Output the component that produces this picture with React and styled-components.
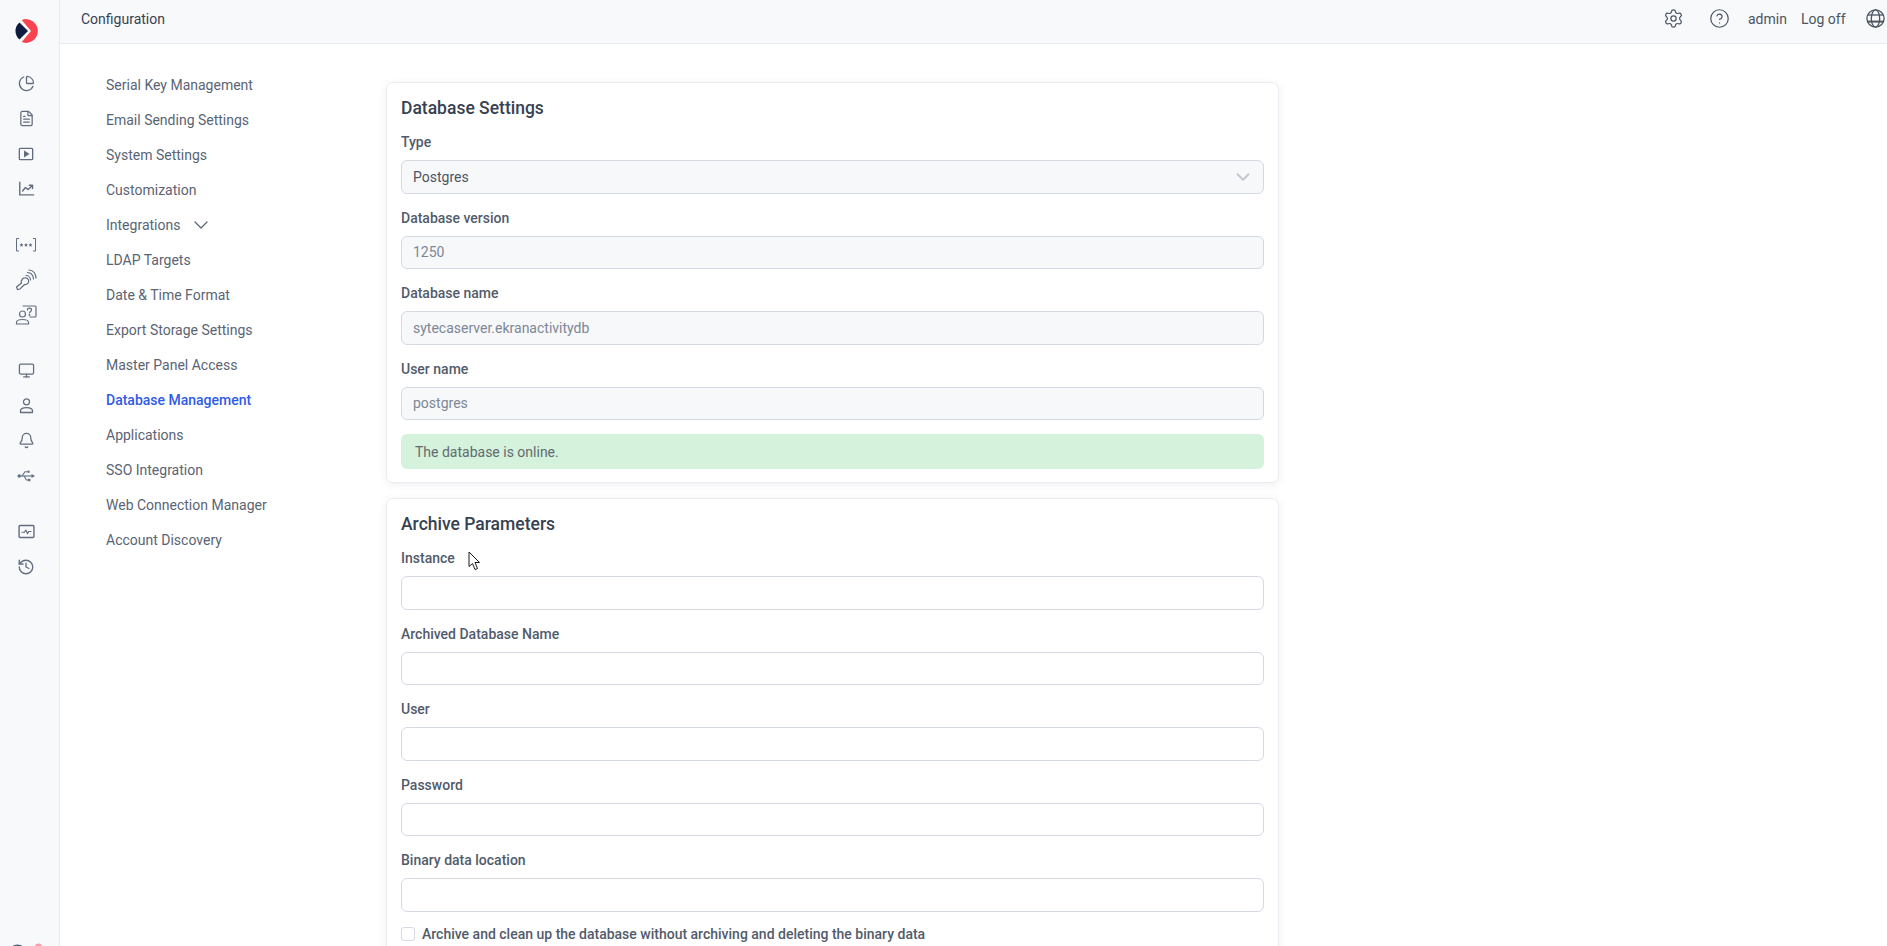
import styled, { createGlobalStyle } from 'styled-components'
import { ChevronDown, Settings, CircleHelp, ChartPie, FileText, Monitor, Bell, History } from 'lucide-react'

const GlobalStyle = createGlobalStyle`
   html, body {
      margin: 0;
      padding: 0;
      height: 100%;
      overflow: hidden;
      background: #fff;
   }
   * {
      box-sizing: border-box;
   }
`

const Page = styled.div`
   position: relative;
   width: 100%;
   height: 946px;
   display: flex;
   overflow: hidden;
   font-family: 'Roboto', sans-serif;
   font-size: 14px;
   color: #4b5563;
`

const Sidebar = styled.aside`
   width: 60px;
   flex-shrink: 0;
   position: relative;
   background: #f8f9fb;
   border-right: 1px solid #e8eaef;
   display: flex;
   flex-direction: column;
   align-items: center;
   padding-top: 19px;
   padding-right: 7px;
`

const LogoBox = styled.div`
   height: 24px;
   margin-bottom: 23px;
   display: flex;
`

const IconGroup = styled.div`
   display: flex;
   flex-direction: column;
   margin-bottom: 21px;
`

const IconItem = styled.div`
   height: 35px;
   width: 35px;
   display: flex;
   align-items: center;
   justify-content: center;
   color: #636d80;
`

const BottomDots = styled.svg`
   position: absolute;
   left: 0;
   bottom: 0;
`

const Main = styled.div`
   flex: 1;
   min-width: 0;
   display: flex;
   flex-direction: column;
`

const TopBar = styled.header`
   height: 44px;
   flex-shrink: 0;
   background: #f8f9fb;
   border-bottom: 1px solid #e8eaef;
   display: flex;
   align-items: center;
   padding: 0 1px 6px 21px;
`

const PageTitle = styled.div`
   flex: 1;
   color: #374151;
`

const TopIcon = styled.div`
   display: flex;
   color: #4b5563;
   margin-left: ${(p) => p.$ml}px;
`

const TopLink = styled.span`
   color: #4b5563;
   margin-left: ${(p) => p.$ml}px;
`

const Content = styled.div`
   flex: 1;
   display: flex;
   align-items: flex-start;
`

const SideNav = styled.nav`
   width: 326px;
   flex-shrink: 0;
   padding: 23.5px 0 0 46px;
   display: flex;
   flex-direction: column;
`

const NavItem = styled.div`
   height: 35px;
   display: flex;
   align-items: center;
   gap: 9px;
   color: ${(p) => (p.$active ? '#2f5be7' : '#5a6474')};
   font-weight: ${(p) => (p.$active ? 500 : 400)};
`

const Cards = styled.div`
   width: 893px;
   padding-top: 38px;
   display: flex;
   flex-direction: column;
   gap: 15px;
`

const Card = styled.section`
   background: #fff;
   border: 1px solid #eaecf1;
   border-radius: 7px;
   padding: 14px 14px 13px 14px;
   box-shadow: 0 2px 8px rgba(60, 70, 100, 0.08);
`

const CardTitle = styled.h2`
   margin: 0 0 13px;
   font-size: 17.5px;
   line-height: 22px;
   font-weight: 500;
   color: #374151;
`

const Field = styled.div`
   margin-bottom: 14px;
`

const Label = styled.label`
   display: block;
   font-weight: 500;
   line-height: 21px;
   margin-bottom: 7px;
   color: #525b6b;
`

const Input = styled.div`
   height: 33.5px;
   border: 1px solid #d5d9e2;
   border-radius: 6px;
   background: ${(p) => (p.$filled ? '#f7f8fa' : '#fff')};
   color: ${(p) => (p.$muted ? '#7d8796' : '#4b5563')};
   display: flex;
   align-items: center;
   justify-content: space-between;
   padding: 0 11px;
`

const SelectArrow = styled(ChevronDown)`
   margin-right: -2px;
   color: #c4c8cf;
`

const Alert = styled.div`
   height: 35px;
   display: flex;
   align-items: center;
   padding: 0 14px;
   border-radius: 6px;
   background: #d5f2dc;
   color: #5f6b70;
`

const CheckRow = styled.div`
   display: flex;
   align-items: center;
   gap: 7px;
   margin-top: 2.5px;
   font-weight: 500;
   color: #525b6b;
`

const CheckBox = styled.span`
   width: 14px;
   height: 14px;
   border: 1px solid #d5d9e2;
   border-radius: 3px;
   background: #fff;
`

const Cursor = styled.svg`
   position: absolute;
   left: 468px;
   top: 551px;
`

const Logo = () => (
   <svg width="24" height="24" viewBox="0 0 24 24">
      <path d="M14 12 L5.5 3.5 A11 11 0 0 0 5.5 20.5 Z" fill="#0f1c3f" />
      <path d="M7.7 0.9 A11.9 11.9 0 1 1 7.7 23.1 L17 12 Z" fill="#f9434f" />
   </svg>
)

const GlobeIcon = () => (
   <svg width="21" height="21" viewBox="0 0 21 21" fill="none" stroke="currentColor" strokeWidth="1.3">
      <circle cx="10.5" cy="10.5" r="8.6" />
      <ellipse cx="10.5" cy="10.5" rx="4.2" ry="8.6" />
      <path d="M2.8 7 H18.2" />
      <path d="M2.4 13.6 H18.6" strokeWidth="2" />
   </svg>
)

const PlayBox = () => (
   <svg width="16" height="16" viewBox="0 0 24 24" fill="none" stroke="currentColor" strokeWidth="2">
      <rect x="2" y="3.5" width="20" height="17" rx="1.5" />
      <path d="M10 8.5 L15.5 12 L10 15.5 Z" fill="currentColor" />
   </svg>
)

const TrendChart = () => (
   <svg width="17" height="17" viewBox="0 0 24 24" fill="none" stroke="currentColor" strokeWidth="2" strokeLinecap="round" strokeLinejoin="round">
      <path d="M2.5 3 V21 H22" />
      <path d="M6.5 15.5 L10.5 10.5 L14 13.5 L20 8" />
      <path d="M16 7.5 H20.5 V12" />
   </svg>
)

const star = 'M0 -2 L0.6 -0.7 L2 -0.6 L1 0.3 L1.2 1.7 L0 1 L-1.2 1.7 L-1 0.3 L-2 -0.6 L-0.6 -0.7 Z'

const Stars = () => (
   <svg width="22" height="16" viewBox="0 0 22 16" fill="none" stroke="currentColor" strokeWidth="1">
      <path d="M4 1.5 H1.5 V14 H4 M18 1.5 H20.5 V14 H18" />
      <g fill="currentColor" stroke="none">
         <path d={star} transform="translate(6.5 8)" />
         <path d={star} transform="translate(11 8)" />
         <path d={star} transform="translate(15.5 8)" />
      </g>
   </svg>
)

const KeyWaves = () => (
   <svg width="22" height="22" viewBox="0 0 22 22" fill="none" stroke="currentColor" strokeWidth="1.2" strokeLinecap="round">
      <path d="M1.5 18 L2.5 20.5 L5 20 L9.5 15.5 C12 16 14.5 13.5 13.5 11 C12.5 8.5 9.5 8 7.5 10 C6.2 11.3 6 13 6.5 14 Z" />
      <path d="M11 6.5 C13.5 6.5 15.5 8.5 15.5 11" />
      <path d="M12.5 3.5 C16 3.5 18.5 6.5 18.5 10" />
      <path d="M14 1 C18.5 1 21 5 21 9" />
   </svg>
)

const UserQuestion = () => (
   <svg width="22" height="20" viewBox="0 0 22 20" fill="none" stroke="currentColor" strokeWidth="1.2" strokeLinecap="round">
      <circle cx="7.5" cy="9" r="3" />
      <path d="M1.5 19 V17.5 C1.5 15.5 3.5 14.5 7.5 14.5 C11.5 14.5 13.5 15.5 13.5 17.5 V19 Z" />
      <path d="M8 1 H20 A1 1 0 0 1 21 2 V11 A1 1 0 0 1 20 12 H15" />
      <path d="M12.5 5 C12.5 2.6 16.5 2.6 16.5 5 C16.5 6.5 14.5 6.5 14.5 8" />
      <circle cx="14.5" cy="10" r="0.4" />
   </svg>
)

const UserIcon = () => (
   <svg width="17" height="17" viewBox="0 0 17 17" fill="none" stroke="currentColor" strokeWidth="1.3" strokeLinejoin="round">
      <circle cx="8.5" cy="4.8" r="3" />
      <path d="M2.5 15.5 V13.8 C2.5 11.8 5 10.6 8.5 10.6 C12 10.6 14.5 11.8 14.5 13.8 V15.5 Z" />
   </svg>
)

const UsbIcon = () => (
   <svg width="18" height="14" viewBox="0 0 18 14" fill="none" stroke="currentColor" strokeWidth="1.1">
      <circle cx="2.2" cy="7" r="1.7" fill="currentColor" stroke="none" />
      <path d="M3 7 H15" />
      <path d="M5 7 L8 2.8 H10.5" />
      <path d="M7 7 L9.5 11 H11" />
      <path d="M14.5 5 L18 7 L14.5 9 Z" fill="currentColor" stroke="none" />
      <circle cx="11.5" cy="2.8" r="1.2" fill="currentColor" stroke="none" />
      <rect x="11" y="9.8" width="2.4" height="2.4" fill="currentColor" stroke="none" />
   </svg>
)

const PulseBox = () => (
   <svg width="17" height="15" viewBox="0 0 24 20" fill="none" stroke="currentColor" strokeWidth="2" strokeLinejoin="round">
      <rect x="1.5" y="1.5" width="21" height="17" rx="1.5" />
      <path d="M5 11 H9 L11 8 L13.5 13 L15 10 H19" strokeWidth="1.6" />
   </svg>
)

const ArrowCursor = () => (
   <Cursor width="13" height="20" viewBox="0 0 13 20">
      <path d="M1 1 V15.5 L4.5 12.5 L7 18.5 L9.5 17.5 L7 11.5 L11.5 11.5 Z" fill="#fff" stroke="#1a1a1a" strokeWidth="1" strokeLinejoin="round" />
   </Cursor>
)

const iconProps = { size: 17, strokeWidth: 1.8 }

const iconGroups = [
   [<ChartPie key="pie" {...iconProps} />, <FileText key="file" {...iconProps} />, <PlayBox key="play" />, <TrendChart key="chart" />],
   [<Stars key="stars" />, <KeyWaves key="key" />, <UserQuestion key="uq" />],
   [<Monitor key="monitor" {...iconProps} />, <UserIcon key="user" />, <Bell key="bell" {...iconProps} />, <UsbIcon key="usb" />],
   [<PulseBox key="pulse" />, <History key="history" size={18} strokeWidth={1.8} />],
]

const navItems = [
   'Serial Key Management',
   'Email Sending Settings',
   'System Settings',
   'Customization',
   'Integrations',
   'LDAP Targets',
   'Date & Time Format',
   'Export Storage Settings',
   'Master Panel Access',
   'Database Management',
   'Applications',
   'SSO Integration',
   'Web Connection Manager',
   'Account Discovery',
]

const archiveFields = ['Instance', 'Archived Database Name', 'User', 'Password', 'Binary data location']

const App = () => {
   return (
      <Page>
         <GlobalStyle />
         <Sidebar>
            <LogoBox><Logo /></LogoBox>
            {iconGroups.map((group, i) => (
               <IconGroup key={i}>
                  {group.map((icon) => (
                     <IconItem key={icon.key}>{icon}</IconItem>
                  ))}
               </IconGroup>
            ))}
            <BottomDots width="59" height="4" viewBox="0 0 59 4">
               <ellipse cx="17.5" cy="4.5" rx="4.5" ry="2" fill="#5b6472" />
               <ellipse cx="38.5" cy="4.5" rx="3.5" ry="3" fill="#f7a0a8" />
            </BottomDots>
         </Sidebar>
         <Main>
            <TopBar>
               <PageTitle>Configuration</PageTitle>
               <TopIcon><Settings size={21} strokeWidth={1.4} /></TopIcon>
               <TopIcon $ml={25}><CircleHelp size={21} strokeWidth={1.4} /></TopIcon>
               <TopLink $ml={18}>admin</TopLink>
               <TopLink $ml={14}>Log off</TopLink>
               <TopIcon $ml={19.5}><GlobeIcon /></TopIcon>
            </TopBar>
            <Content>
               <SideNav>
                  {navItems.map((item) => (
                     <NavItem key={item} $active={item === 'Database Management'}>
                        {item}
                        {item === 'Integrations' && <ChevronDown size={24} strokeWidth={1.2} />}
                     </NavItem>
                  ))}
               </SideNav>
               <Cards>
                  <Card>
                     <CardTitle>Database Settings</CardTitle>
                     <Field>
                        <Label>Type</Label>
                        <Input $filled>
                           Postgres
                           <SelectArrow size={22} strokeWidth={2.2} />
                        </Input>
                     </Field>
                     <Field>
                        <Label>Database version</Label>
                        <Input $filled $muted>1250</Input>
                     </Field>
                     <Field>
                        <Label>Database name</Label>
                        <Input $filled $muted>sytecaserver.ekranactivitydb</Input>
                     </Field>
                     <Field>
                        <Label>User name</Label>
                        <Input $filled $muted>postgres</Input>
                     </Field>
                     <Alert>The database is online.</Alert>
                  </Card>
                  <Card>
                     <CardTitle>Archive Parameters</CardTitle>
                     {archiveFields.map((name) => (
                        <Field key={name}>
                           <Label>{name}</Label>
                           <Input />
                        </Field>
                     ))}
                     <CheckRow>
                        <CheckBox />
                        Archive and clean up the database without archiving and deleting the binary data
                     </CheckRow>
                  </Card>
               </Cards>
            </Content>
         </Main>
         <ArrowCursor />
      </Page>
   )
}

export default App
